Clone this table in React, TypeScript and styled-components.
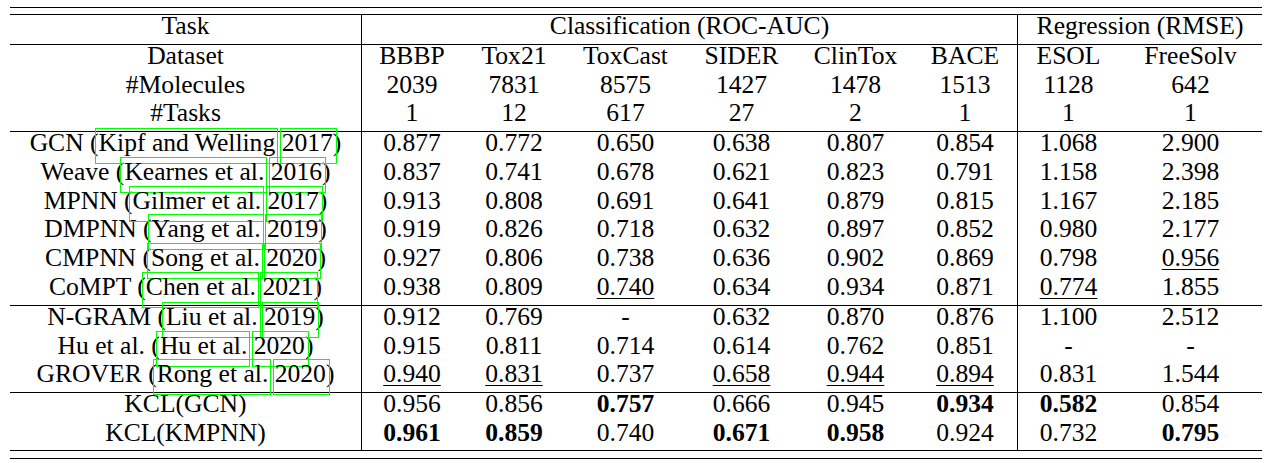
import React from 'react';
import styled, { createGlobalStyle } from 'styled-components';

const GlobalStyle = createGlobalStyle`
  html, body { margin: 0; padding: 0; background: #ffffff; }
  body {
    font-family: "Liberation Serif", "Times New Roman", serif;
    color: #000000;
  }
`;

const COLS = '352px 100px 104px 119px 113px 115px 105px 101px 143px';

const Page = styled.div`
  padding: 7px 0 0 10px;
  width: 1252px;
`;

const Rule = styled.div<{ $gap: number }>`
  border-top: 1px solid #000;
  margin: ${(p) => p.$gap}px 0;
`;

const Table = styled.div`
  display: flex;
  flex-direction: column;
  border-top: 1px solid #000;
  border-bottom: 1px solid #000;
  font-size: 25.6px;
`;

const Section = styled.div<{ $h: number; $last?: boolean }>`
  box-sizing: border-box;
  height: ${(p) => p.$h}px;
  display: flex;
  flex-direction: column;
  border-bottom: ${(p) => (p.$last ? 'none' : '1px solid #000')};
`;

const Row = styled.div`
  flex: 1;
  display: grid;
  grid-template-columns: ${COLS};
`;

const Cell = styled.div<{ $span?: number; $divider?: boolean; $bold?: boolean; $under?: boolean }>`
  box-sizing: border-box;
  grid-column: span ${(p) => p.$span ?? 1};
  border-right: ${(p) => (p.$divider ? '1px solid #000' : 'none')};
  text-align: center;
  line-height: 22px;
  white-space: nowrap;
  font-weight: ${(p) => (p.$bold ? 700 : 400)};
`;

const Value = styled.span<{ $under?: boolean }>`
  text-decoration: ${(p) => (p.$under ? 'underline' : 'none')};
  text-decoration-thickness: 1px;
  text-underline-offset: 3px;
`;

const LinkBox = styled.span<{ $kind: 'author' | 'year' }>`
  position: relative;
  &::after {
    content: '';
    position: absolute;
    top: 0;
    bottom: -7px;
    left: ${(p) => (p.$kind === 'author' ? -4 : -2)}px;
    right: ${(p) => (p.$kind === 'author' ? -3 : -4)}px;
    border: 1px solid #00ff00;
    pointer-events: none;
  }
`;

type Method = { name: string; author?: string; year?: string; values: string[] };

const group1: Method[] = [
  { name: 'GCN', author: 'Kipf and Welling', year: '2017', values: ['0.877', '0.772', '0.650', '0.638', '0.807', '0.854', '1.068', '2.900'] },
  { name: 'Weave', author: 'Kearnes et al.', year: '2016', values: ['0.837', '0.741', '0.678', '0.621', '0.823', '0.791', '1.158', '2.398'] },
  { name: 'MPNN', author: 'Gilmer et al.', year: '2017', values: ['0.913', '0.808', '0.691', '0.641', '0.879', '0.815', '1.167', '2.185'] },
  { name: 'DMPNN', author: 'Yang et al.', year: '2019', values: ['0.919', '0.826', '0.718', '0.632', '0.897', '0.852', '0.980', '2.177'] },
  { name: 'CMPNN', author: 'Song et al.', year: '2020', values: ['0.927', '0.806', '0.738', '0.636', '0.902', '0.869', '0.798', '_0.956'] },
  { name: 'CoMPT', author: 'Chen et al.', year: '2021', values: ['0.938', '0.809', '_0.740', '0.634', '0.934', '0.871', '_0.774', '1.855'] },
];

const group2: Method[] = [
  { name: 'N-GRAM', author: 'Liu et al.', year: '2019', values: ['0.912', '0.769', '-', '0.632', '0.870', '0.876', '1.100', '2.512'] },
  { name: 'Hu et al.', author: 'Hu et al.', year: '2020', values: ['0.915', '0.811', '0.714', '0.614', '0.762', '0.851', '-', '-'] },
  { name: 'GROVER', author: 'Rong et al.', year: '2020', values: ['_0.940', '_0.831', '0.737', '_0.658', '_0.944', '_0.894', '0.831', '1.544'] },
];

const group3: Method[] = [
  { name: 'KCL(GCN)', values: ['0.956', '0.856', '*0.757', '0.666', '0.945', '*0.934', '*0.582', '0.854'] },
  { name: 'KCL(KMPNN)', values: ['*0.961', '*0.859', '0.740', '*0.671', '*0.958', '0.924', '0.732', '*0.795'] },
];

const headers: { label: string; cells: string[] }[] = [
  { label: 'Dataset', cells: ['BBBP', 'Tox21', 'ToxCast', 'SIDER', 'ClinTox', 'BACE', 'ESOL', 'FreeSolv'] },
  { label: '#Molecules', cells: ['2039', '7831', '8575', '1427', '1478', '1513', '1128', '642'] },
  { label: '#Tasks', cells: ['1', '12', '617', '27', '2', '1', '1', '1'] },
];

const MethodRow: React.FC<{ m: Method }> = ({ m }) => (
  <Row>
    <Cell $divider>
      {m.author ? (
        <>
          {m.name} (<LinkBox $kind="author">{m.author}</LinkBox> <LinkBox $kind="year">{m.year}</LinkBox>)
        </>
      ) : (
        m.name
      )}
    </Cell>
    {m.values.map((v, i) => {
      const bold = v.startsWith('*');
      const under = v.startsWith('_');
      const text = bold || under ? v.slice(1) : v;
      return (
        <Cell key={i} $divider={i === 5} $bold={bold}>
          <Value $under={under}>{text}</Value>
        </Cell>
      );
    })}
  </Row>
);

export default function App() {
  return (
    <>
      <GlobalStyle />
      <Page>
        <Rule $gap={0} style={{ marginBottom: 6 }} />
        <Table>
          <Section $h={30}>
            <Row>
              <Cell $divider>Task</Cell>
              <Cell $span={6} $divider>Classification (ROC-AUC)</Cell>
              <Cell $span={2}>Regression (RMSE)</Cell>
            </Row>
          </Section>
          <Section $h={87}>
            {headers.map((h) => (
              <Row key={h.label}>
                <Cell $divider>{h.label}</Cell>
                {h.cells.map((c, i) => (
                  <Cell key={i} $divider={i === 5}>{c}</Cell>
                ))}
              </Row>
            ))}
          </Section>
          <Section $h={174}>
            {group1.map((m) => <MethodRow key={m.name} m={m} />)}
          </Section>
          <Section $h={87}>
            {group2.map((m) => <MethodRow key={m.name} m={m} />)}
          </Section>
          <Section $h={57} $last>
            {group3.map((m) => <MethodRow key={m.name} m={m} />)}
          </Section>
        </Table>
        <Rule $gap={0} style={{ marginTop: 7 }} />
      </Page>
    </>
  );
}
